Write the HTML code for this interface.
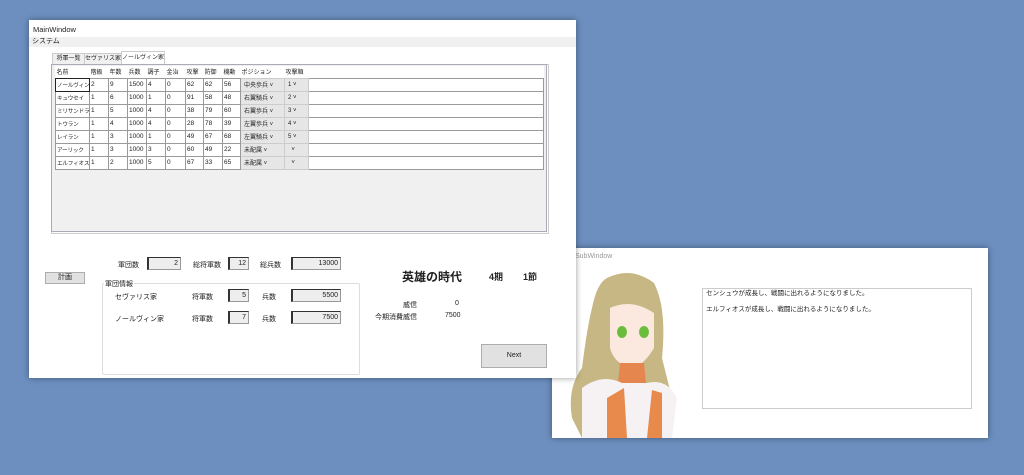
<html><head><style>
body{margin:0;width:1024px;height:475px;background:#6c8fbf;position:relative;overflow:hidden;font-family:"Liberation Sans","Noto Sans CJK JP",sans-serif;font-size:7px;color:#222}
.a{position:absolute}
.win{background:#fff;box-shadow:0 0 6px rgba(0,0,0,.4)}
table{border-collapse:collapse;table-layout:fixed}
td{border:1px solid #9a9a9a;height:13px;padding:0 1px;font-size:6.5px;white-space:nowrap;overflow:hidden;box-sizing:border-box}
td.n{font-size:5.6px;letter-spacing:-0.2px;padding:0 0 0 1px}
.h td{border:none;background:#fff;height:12px;font-size:6px}
.cb{background:#e6e6e6;border:1px solid #ccc;font-size:6px;padding-left:3px}
.box{background:#eee;border:1px solid #999;border-left:2px solid #333;border-top:1px solid #333;text-align:right;font-size:7px;padding-right:2px;height:11px;line-height:11px}
.tab{position:absolute;height:10px;border:1px solid #ccc;background:#f0f0f0;text-align:center;line-height:10px;box-sizing:content-box;font-size:6px;white-space:nowrap}
</style></head><body>
<!-- Sub window -->
<div class="a win" style="left:552px;top:248px;width:436px;height:190px">
<div class="a" style="left:23px;top:5px;color:#999;font-size:7px">SubWindow</div>
<svg class="a" style="left:10px;top:20px" width="120" height="170">
<path d="M45 10 Q70 -2 92 15 Q105 40 100 90 L110 130 L100 170 L20 170 L10 150 Q5 120 20 100 Q25 60 30 40 Q35 15 45 10Z" fill="#c7b784"/>
<path d="M48 40 Q70 30 92 45 L92 80 Q80 100 68 100 Q52 95 48 80Z" fill="#fbe8df"/>
<ellipse cx="60" cy="64" rx="5" ry="6" fill="#6abd3c"/><ellipse cx="82" cy="64" rx="5" ry="6" fill="#6abd3c"/>
<path d="M58 95 L82 95 L84 115 L56 115Z" fill="#e6864f"/>
<path d="M20 120 Q40 105 60 115 L85 115 Q105 110 115 130 L110 170 L20 170Z" fill="#f6f2f4"/>
<path d="M45 130 L62 120 L65 170 L45 170Z M90 122 L100 125 L100 170 L85 170Z" fill="#e88a4c"/>
</svg>
<div class="a" style="left:150px;top:40px;width:262px;height:117px;border:1px solid #ccc;font-size:6.5px;line-height:8px;padding:1px 3px">センシュウが成長し、戦闘に出れるようになりました。<br><br>エルフィオスが成長し、戦闘に出れるようになりました。</div>
</div>
<!-- Main window -->
<div class="a win" style="left:29px;top:20px;width:547px;height:358px;overflow:hidden">
<div class="a" style="left:4px;top:5px;font-size:7.5px">MainWindow</div>
<div class="a" style="left:0;top:17px;width:544px;height:10px;background:#f0f0f0;font-size:7px;padding-left:3px;line-height:10px">システム</div>
<div class="tab" style="left:23px;top:33px;width:31px">将軍一覧</div>
<div class="tab" style="left:55px;top:33px;width:36px">セヴァリス家</div>
<div class="tab" style="left:92px;top:31px;width:42px;height:13px;border-bottom:none;background:#fff;line-height:12px">ノールヴィン家</div>
<div class="a" style="left:22px;top:44px;width:496px;height:168px;border:1px solid #ccc;background:#fff"></div>
<div class="a" style="left:22px;top:44px;width:494px;height:166px;border:1px solid #aab;background:#f0f0f0"></div>
<table class="a" style="left:26px;top:46px;width:489px;background:#fff">
<colgroup><col style="width:34px"><col style="width:19px"><col style="width:19px"><col style="width:19px"><col style="width:19px"><col style="width:20px"><col style="width:18px"><col style="width:19px"><col style="width:18px"><col style="width:44px"><col style="width:24px"><col></colgroup>
<tr class="h"><td>名前</td><td>階級</td><td>年数</td><td>兵数</td><td>調子</td><td>金治</td><td>攻撃</td><td>防御</td><td>機動</td><td>ポジション</td><td>攻撃順</td><td></td></tr>
<tr><td class="n" style="border:1px solid #222">ノールヴィン</td><td>2</td><td>9</td><td>1500</td><td>4</td><td>0</td><td>62</td><td>62</td><td>56</td><td class="cb">中央歩兵 ˅</td><td class="cb">1 ˅</td><td></td></tr>
<tr><td class="n">キュウセイ</td><td>1</td><td>6</td><td>1000</td><td>1</td><td>0</td><td>91</td><td>58</td><td>48</td><td class="cb">右翼騎兵 ˅</td><td class="cb">2 ˅</td><td></td></tr>
<tr><td class="n">ミリサンドラ</td><td>1</td><td>5</td><td>1000</td><td>4</td><td>0</td><td>38</td><td>79</td><td>60</td><td class="cb">右翼歩兵 ˅</td><td class="cb">3 ˅</td><td></td></tr>
<tr><td class="n">トウラン</td><td>1</td><td>4</td><td>1000</td><td>4</td><td>0</td><td>28</td><td>78</td><td>39</td><td class="cb">左翼歩兵 ˅</td><td class="cb">4 ˅</td><td></td></tr>
<tr><td class="n">レイラン</td><td>1</td><td>3</td><td>1000</td><td>1</td><td>0</td><td>49</td><td>67</td><td>68</td><td class="cb">左翼騎兵 ˅</td><td class="cb">5 ˅</td><td></td></tr>
<tr><td class="n">アーリック</td><td>1</td><td>3</td><td>1000</td><td>3</td><td>0</td><td>60</td><td>49</td><td>22</td><td class="cb">未配属 ˅</td><td class="cb">&nbsp;&nbsp;˅</td><td></td></tr>
<tr><td class="n">エルフィオス</td><td>1</td><td>2</td><td>1000</td><td>5</td><td>0</td><td>67</td><td>33</td><td>65</td><td class="cb">未配属 ˅</td><td class="cb">&nbsp;&nbsp;˅</td><td></td></tr>
</table>
<div class="a" style="left:16px;top:252px;width:38px;height:10px;background:#e1e1e1;border:1px solid #adadad;text-align:center;line-height:10px">計画</div>
<div class="a" style="left:89px;top:240px">軍団数</div><div class="a box" style="left:118px;top:237px;width:29px">2</div>
<div class="a" style="left:164px;top:240px">総将軍数</div><div class="a box" style="left:199px;top:237px;width:16px">12</div>
<div class="a" style="left:231px;top:240px">総兵数</div><div class="a box" style="left:262px;top:237px;width:45px">13000</div>
<div class="a" style="left:73px;top:263px;width:256px;height:90px;border:1px solid #ddd;border-radius:2px"></div>
<div class="a" style="left:75px;top:259px;background:#fff;padding:0 1px">軍団情報</div>
<div class="a" style="left:86px;top:272px">セヴァリス家</div><div class="a" style="left:163px;top:272px">将軍数</div><div class="a box" style="left:199px;top:269px;width:16px">5</div><div class="a" style="left:233px;top:272px">兵数</div><div class="a box" style="left:262px;top:269px;width:45px">5500</div>
<div class="a" style="left:86px;top:294px">ノールヴィン家</div><div class="a" style="left:163px;top:294px">将軍数</div><div class="a box" style="left:199px;top:291px;width:16px">7</div><div class="a" style="left:233px;top:294px">兵数</div><div class="a box" style="left:262px;top:291px;width:45px">7500</div>
<div class="a" style="left:373px;top:248px;font-size:12px;font-weight:bold">英雄の時代</div>
<div class="a" style="left:460px;top:250px;font-size:9px;font-weight:bold">4期</div>
<div class="a" style="left:494px;top:250px;font-size:9px;font-weight:bold">1節</div>
<div class="a" style="left:374px;top:280px">威信</div><div class="a" style="left:426px;top:280px">0</div>
<div class="a" style="left:346px;top:292px">今期消費威信</div><div class="a" style="left:416px;top:292px">7500</div>
<div class="a" style="left:452px;top:324px;width:64px;height:22px;background:#e1e1e1;border:1px solid #adadad;text-align:center;line-height:22px">Next</div>
</div>
</body></html>
